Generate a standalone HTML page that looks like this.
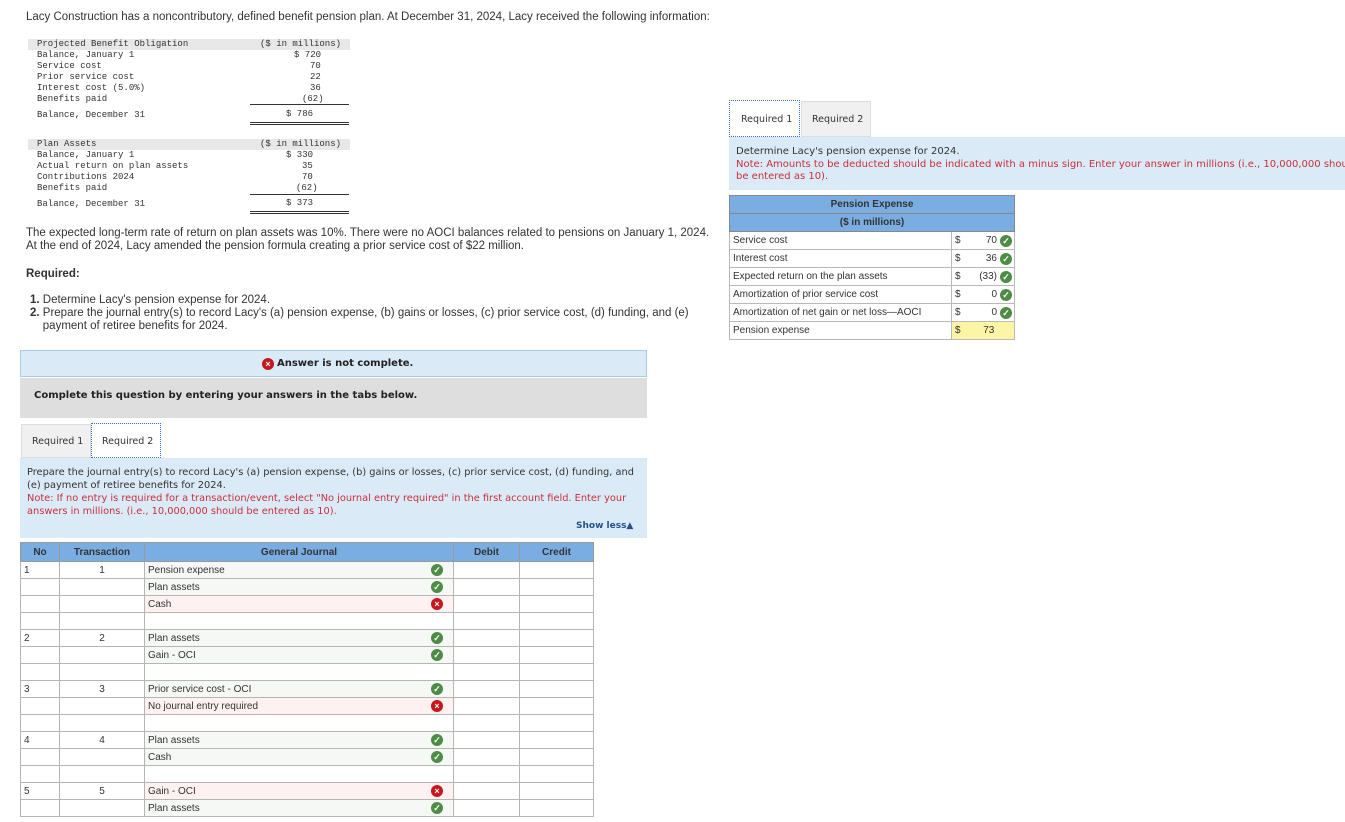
<!DOCTYPE html>
<html><head><meta charset="utf-8">
<style>
*{margin:0;padding:0;box-sizing:border-box}
body{width:1345px;height:822px;background:#fff;position:relative;overflow:hidden;font-family:"Liberation Sans",sans-serif;color:#333;font-size:11px}
.a{position:absolute;white-space:nowrap}
.m{font-family:"Liberation Mono",monospace;font-size:9px;color:#333}
.ok,.no{display:inline-block;width:12px;height:12px;border-radius:50%;position:absolute;color:#fff;font-size:9px;font-weight:bold;text-align:center;line-height:12px}
.ok{background:#4c8c45}
.no{background:#c8161d}
table{border-collapse:collapse}
.jt td{height:17px;border:1px solid #b5b5b5;font-size:10px;padding:0 3px;position:relative}
.jt th{background:#7aaee2;height:19px;font-size:10px;border:1px solid #999;font-weight:bold}
.pt td{height:18px;border:1px solid #b9b9b9;font-size:10px;padding:0 3px;position:relative}
</style></head><body>
<div class="a" style="left:26px;top:11px;font-size:11.5px">Lacy Construction has a noncontributory, defined benefit pension plan. At December 31, 2024, Lacy received the following information:</div>

<div class="a" style="left:28px;top:39px;width:322px;height:11px;background:#e8e8e8"></div>
<div class="a m" style="left:37px;top:39px">Projected Benefit Obligation</div>
<div class="a m" style="left:260px;top:39px">($ in millions)</div>
<div class="a m" style="left:37px;top:50px">Balance, January 1</div><div class="a m" style="left:294px;top:50px">$ 720</div>
<div class="a m" style="left:37px;top:61px">Service cost</div><div class="a m" style="left:310px;top:61px">70</div>
<div class="a m" style="left:37px;top:72px">Prior service cost</div><div class="a m" style="left:310px;top:72px">22</div>
<div class="a m" style="left:37px;top:83px">Interest cost (5.0%)</div><div class="a m" style="left:310px;top:83px">36</div>
<div class="a m" style="left:37px;top:94px">Benefits paid</div><div class="a m" style="left:302px;top:94px">(62)</div>
<div class="a" style="left:250px;top:104px;width:99px;border-top:1px solid #333"></div>
<div class="a m" style="left:37px;top:110px">Balance, December 31</div><div class="a m" style="left:286px;top:109px">$ 786</div>
<div class="a" style="left:250px;top:122px;width:99px;border-top:3px double #333"></div>

<div class="a" style="left:28px;top:139px;width:322px;height:11px;background:#e8e8e8"></div>
<div class="a m" style="left:37px;top:139px">Plan Assets</div>
<div class="a m" style="left:260px;top:139px">($ in millions)</div>
<div class="a m" style="left:37px;top:150px">Balance, January 1</div><div class="a m" style="left:286px;top:150px">$ 330</div>
<div class="a m" style="left:37px;top:161px">Actual return on plan assets</div><div class="a m" style="left:302px;top:161px">35</div>
<div class="a m" style="left:37px;top:172px">Contributions 2024</div><div class="a m" style="left:302px;top:172px">70</div>
<div class="a m" style="left:37px;top:183px">Benefits paid</div><div class="a m" style="left:296px;top:183px">(62)</div>
<div class="a" style="left:250px;top:194px;width:99px;border-top:1px solid #333"></div>
<div class="a m" style="left:37px;top:199px">Balance, December 31</div><div class="a m" style="left:286px;top:198px">$ 373</div>
<div class="a" style="left:250px;top:211px;width:99px;border-top:3px double #333"></div>

<div class="a" style="left:26px;top:227px;line-height:13px;font-size:11.5px">The expected long-term rate of return on plan assets was 10%. There were no AOCI balances related to pensions on January 1, 2024.<br>At the end of 2024, Lacy amended the pension formula creating a prior service cost of $22 million.</div>
<div class="a" style="left:26px;top:268px;font-weight:bold;font-size:11.5px">Required:</div>
<div class="a" style="left:30px;top:294px;line-height:13px;font-size:11.5px"><b>1.</b> Determine Lacy's pension expense for 2024.<br><b>2.</b> Prepare the journal entry(s) to record Lacy's (a) pension expense, (b) gains or losses, (c) prior service cost, (d) funding, and (e)<br>&nbsp;&nbsp;&nbsp;&nbsp;payment of retiree benefits for 2024.</div>

<div class="a" style="left:20px;top:350px;width:627px;height:27px;background:#dbeaf7;border:1px solid #a9cbe8"></div>
<div class="no" style="left:262px;top:358px">×</div>
<div class="a" style="left:277px;top:358px;font-weight:bold;font-size:10px;color:#222;font-family:'DejaVu Sans',sans-serif">Answer is not complete.</div>
<div class="a" style="left:20px;top:378px;width:627px;height:40px;background:#dedede"></div>
<div class="a" style="left:34px;top:390px;font-weight:bold;font-size:10px;color:#222;font-family:'DejaVu Sans',sans-serif">Complete this question by entering your answers in the tabs below.</div>

<div class="a" style="left:21px;top:424px;width:70px;height:34px;background:#f0f0f0;border:1px solid #ddd"></div>
<div class="a" style="left:32px;top:436px;font-size:9.5px;font-family:'DejaVu Sans',sans-serif">Required 1</div>
<div class="a" style="left:91px;top:423px;width:70px;height:35px;background:#fff;border:1px dotted #3a6fc4"></div>
<div class="a" style="left:102px;top:436px;font-size:9.5px;font-family:'DejaVu Sans',sans-serif">Required 2</div>
<div class="a" style="left:20px;top:458px;width:627px;height:80px;background:#dbeaf7"></div>
<div class="a" style="left:27px;top:466px;font-size:9.8px;line-height:13px;font-family:'DejaVu Sans',sans-serif">Prepare the journal entry(s) to record Lacy's (a) pension expense, (b) gains or losses, (c) prior service cost, (d) funding, and<br>(e) payment of retiree benefits for 2024.<br><span style="color:#c8303a">Note: If no entry is required for a transaction/event, select "No journal entry required" in the first account field. Enter your<br>answers in millions. (i.e., 10,000,000 should be entered as 10).</span></div>
<div class="a" style="left:576px;top:521px;font-size:9px;font-weight:bold;color:#24518a;font-family:'DejaVu Sans',sans-serif">Show less▲</div>

<table class="jt a" style="left:20px;top:542px;width:574px">
<tr><th style="width:39px">No</th><th style="width:85px">Transaction</th><th style="width:309px">General Journal</th><th style="width:66px">Debit</th><th>Credit</th></tr>
<tr><td>1</td><td style="text-align:center">1</td><td style="background:#f6f8f5">Pension expense<span class="ok" style="right:10px;top:2px">✓</span></td><td></td><td></td></tr>
<tr><td></td><td></td><td style="background:#f6f8f5">Plan assets<span class="ok" style="right:10px;top:2px">✓</span></td><td></td><td></td></tr>
<tr><td></td><td></td><td style="background:#fdf1f1">Cash<span class="no" style="right:10px;top:2px">×</span></td><td></td><td></td></tr>
<tr><td></td><td></td><td></td><td></td><td></td></tr>
<tr><td>2</td><td style="text-align:center">2</td><td style="background:#f6f8f5">Plan assets<span class="ok" style="right:10px;top:2px">✓</span></td><td></td><td></td></tr>
<tr><td></td><td></td><td style="background:#f6f8f5">Gain - OCI<span class="ok" style="right:10px;top:2px">✓</span></td><td></td><td></td></tr>
<tr><td></td><td></td><td></td><td></td><td></td></tr>
<tr><td>3</td><td style="text-align:center">3</td><td style="background:#f6f8f5">Prior service cost - OCI<span class="ok" style="right:10px;top:2px">✓</span></td><td></td><td></td></tr>
<tr><td></td><td></td><td style="background:#fdf1f1">No journal entry required<span class="no" style="right:10px;top:2px">×</span></td><td></td><td></td></tr>
<tr><td></td><td></td><td></td><td></td><td></td></tr>
<tr><td>4</td><td style="text-align:center">4</td><td style="background:#f6f8f5">Plan assets<span class="ok" style="right:10px;top:2px">✓</span></td><td></td><td></td></tr>
<tr><td></td><td></td><td style="background:#f6f8f5">Cash<span class="ok" style="right:10px;top:2px">✓</span></td><td></td><td></td></tr>
<tr><td></td><td></td><td></td><td></td><td></td></tr>
<tr><td>5</td><td style="text-align:center">5</td><td style="background:#fdf1f1">Gain - OCI<span class="no" style="right:10px;top:2px">×</span></td><td></td><td></td></tr>
<tr><td></td><td></td><td style="background:#f6f8f5">Plan assets<span class="ok" style="right:10px;top:2px">✓</span></td><td></td><td></td></tr>
</table>

<div class="a" style="left:729px;top:100px;width:71px;height:37px;background:#fff;border:1px dotted #3a6fc4"></div>
<div class="a" style="left:741px;top:114px;font-size:9.5px;font-family:'DejaVu Sans',sans-serif">Required 1</div>
<div class="a" style="left:801px;top:101px;width:70px;height:36px;background:#f0f0f0;border:1px solid #ddd"></div>
<div class="a" style="left:812px;top:114px;font-size:9.5px;font-family:'DejaVu Sans',sans-serif">Required 2</div>
<div class="a" style="left:729px;top:137px;width:616px;height:53px;background:#dbeaf7"></div>
<div class="a" style="left:736px;top:146px;font-size:10px;line-height:12.5px;font-family:'DejaVu Sans',sans-serif">Determine Lacy's pension expense for 2024.<br><span style="color:#c8303a">Note: Amounts to be deducted should be indicated with a minus sign. Enter your answer in millions (i.e., 10,000,000 should<br>be entered as 10).</span></div>

<table class="pt a" style="left:729px;top:195px;width:286px">
<tr><td colspan="3" style="background:#7aaee2;text-align:center;font-weight:bold;border-color:#888">Pension Expense</td></tr>
<tr><td colspan="3" style="background:#7aaee2;text-align:center;font-weight:bold;border-color:#888">($ in millions)</td></tr>
<tr><td style="width:222px">Service cost</td><td style="width:8px;border-right:none">$</td><td style="text-align:right;padding-right:17px;border-left:none">70<span class="ok" style="right:2px;top:3px">✓</span></td></tr>
<tr><td>Interest cost</td><td style="border-right:none">$</td><td style="text-align:right;padding-right:17px;border-left:none">36<span class="ok" style="right:2px;top:3px">✓</span></td></tr>
<tr><td>Expected return on the plan assets</td><td style="border-right:none">$</td><td style="text-align:right;padding-right:17px;border-left:none">(33)<span class="ok" style="right:2px;top:3px">✓</span></td></tr>
<tr><td>Amortization of prior service cost</td><td style="border-right:none">$</td><td style="text-align:right;padding-right:17px;border-left:none">0<span class="ok" style="right:2px;top:3px">✓</span></td></tr>
<tr><td>Amortization of net gain or net loss—AOCI</td><td style="border-right:none">$</td><td style="text-align:right;padding-right:17px;border-left:none">0<span class="ok" style="right:2px;top:3px">✓</span></td></tr>
<tr><td>Pension expense</td><td style="background:#fdf5a6;border-right:none">$</td><td style="background:#fdf5a6;text-align:center;border-left:none">73</td></tr>
</table>
</body></html>
